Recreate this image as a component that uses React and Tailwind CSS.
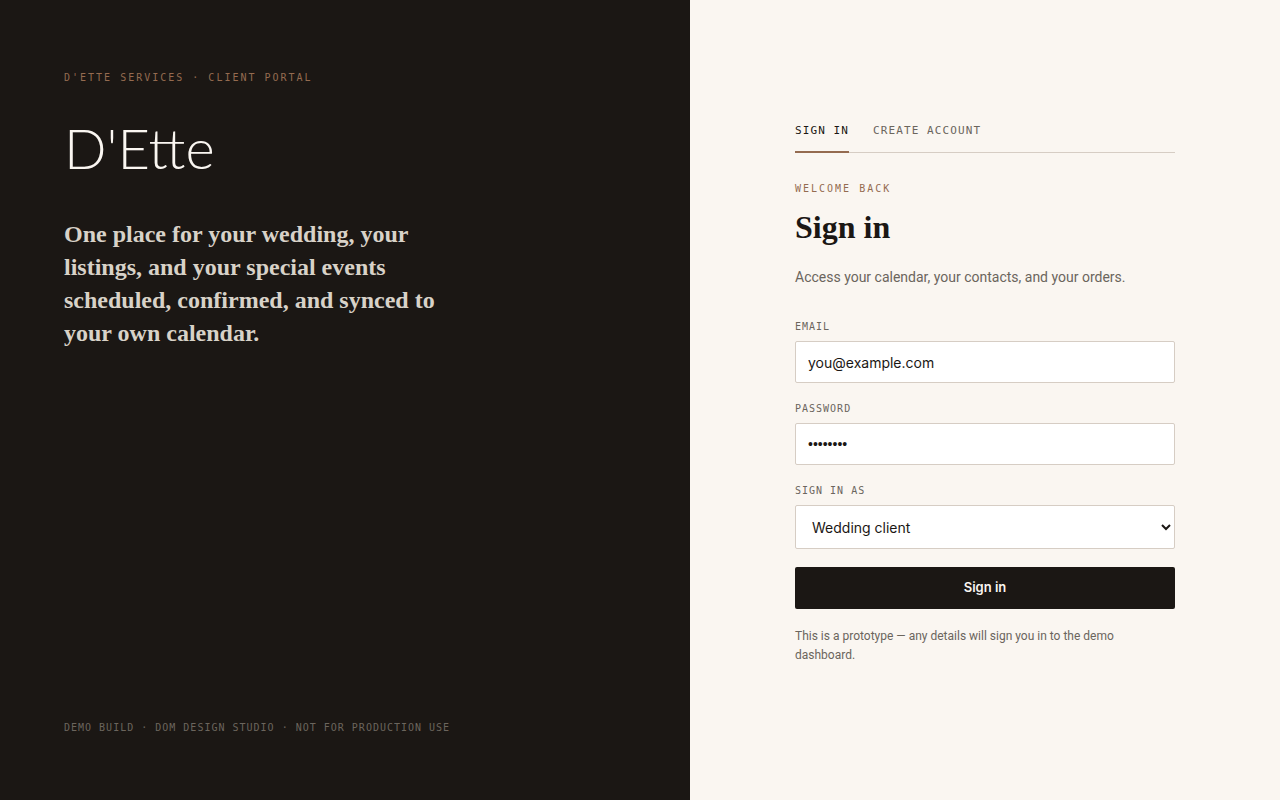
import React, { useState } from 'react'
import clsx from 'clsx'

const TABS = ['Sign in', 'Create account']
const ROLES = ['Wedding client', 'Real estate client', 'Special events client']

const mono = "font-['DejaVu_Sans_Mono',monospace] leading-4 uppercase"
const control = 'w-full rounded-xs border border-[#d6cdc4] bg-white px-3 text-sm'

function Eyebrow({ children }) {
	return <p className={clsx(mono, 'text-[10px] tracking-[2px] text-[#946b50]')}>{children}</p>
}

function Field({ id, label, children }) {
	return (
		<div className="flex flex-col gap-1.5">
			<label htmlFor={id} className={clsx(mono, 'text-[10px] tracking-widest text-[#6b655d]')}>
				{label}
			</label>
			{children}
		</div>
	)
}

export default function App() {
	const [tab, setTab] = useState('Sign in')
	const [email, setEmail] = useState('you@example.com')
	const [password, setPassword] = useState('password')
	const [role, setRole] = useState(ROLES[0])

	return (
		<main className="grid min-h-screen grid-cols-[690fr_590fr] bg-[#faf6f1] font-[Inter,sans-serif] text-[#1b1714]">
			<section className="flex flex-col justify-between bg-[#1b1714] px-16 pt-[70px] pb-16">
				<div>
					<Eyebrow>D'Ette Services · Client Portal</Eyebrow>
					<h1 className="mt-[30px] font-[Lato,sans-serif] text-[56px] leading-16 font-light text-[#faf6f1]">D'Ette</h1>
					<p className="mt-[38px] max-w-96 font-['Liberation_Serif',serif] text-2xl leading-[33px] font-bold text-[#d8d2c8]">
						One place for your wedding, your listings, and your special events scheduled, confirmed, and synced to your own calendar.
					</p>
				</div>
				<p className={clsx(mono, 'text-[10px] tracking-widest text-[#6b655d]')}>
					Demo build · DOM Design Studio · Not for production use
				</p>
			</section>

			<section className="flex items-center justify-center px-6 pt-6 pb-9">
				<div className="w-full max-w-95">
					<div className="mb-7 flex gap-6 border-b border-[#d6cdc4]">
						{TABS.map((name) => (
							<button
								key={name}
								type="button"
								onClick={() => setTab(name)}
								className={clsx(
									mono,
									'-mb-px border-b-2 pb-3 text-[11px] tracking-widest',
									tab === name ? 'border-[#946b50]' : 'border-transparent text-[#6b655d]'
								)}
							>
								{name}
							</button>
						))}
					</div>

					<Eyebrow>Welcome back</Eyebrow>
					<h2 className="mt-2.5 font-['Liberation_Serif',serif] text-[32px] leading-10 font-bold">Sign in</h2>
					<p className="mt-5 font-[Roboto,sans-serif] text-sm leading-5 text-[#6b655d]">
						Access your calendar, your contacts, and your orders.
					</p>

					<form className="mt-8 flex flex-col gap-[18px]" onSubmit={(e) => e.preventDefault()}>
						<Field id="email" label="Email">
							<input id="email" type="email" value={email} onChange={(e) => setEmail(e.target.value)} className={clsx(control, 'h-[42px]')} />
						</Field>
						<Field id="password" label="Password">
							<input
								id="password"
								type="password"
								value={password}
								onChange={(e) => setPassword(e.target.value)}
								className={clsx(control, "h-[42px] font-['Liberation_Sans',sans-serif]")}
							/>
						</Field>
						<Field id="role" label="Sign in as">
							<select id="role" value={role} onChange={(e) => setRole(e.target.value)} className={clsx(control, 'h-11')}>
								{ROLES.map((name) => (
									<option key={name}>{name}</option>
								))}
							</select>
						</Field>
						<button type="submit" className="h-[42px] rounded-xs bg-[#1b1714] text-[13px] font-semibold text-[#faf6f1]">
							Sign in
						</button>
					</form>

					<p className="mt-[18px] font-[Roboto,sans-serif] text-xs leading-[19px] text-[#6b655d]">
						This is a prototype — any details will sign you in to the demo dashboard.
					</p>
				</div>
			</section>
		</main>
	)
}
